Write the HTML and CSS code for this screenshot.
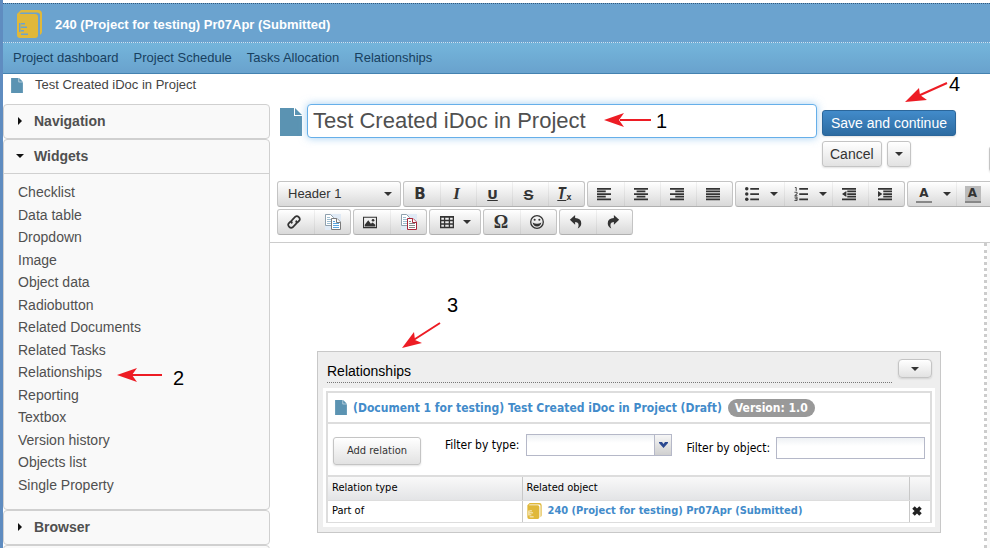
FILE: index.html
```html
<!DOCTYPE html>
<html lang="en">
<head>
<meta charset="utf-8">
<title>240 (Project for testing) Pr07Apr</title>
<link rel="stylesheet" href="styles.css">
</head>
<body>
<svg class="defs" aria-hidden="true">
  <symbol id="doc" viewBox="0 0 22 28"><path d="M0 0H14V8H22V28H0Z"/><path d="M15 0L22 7H15Z"/></symbol>
  <symbol id="caret" viewBox="0 0 8 4"><path d="M0 0H8L4 4Z"/></symbol>
  <symbol id="book" viewBox="0 0 25 28">
    <path class="gold" d="M0 4L4 0H21Q25 0 25 4V22Q25 23.500 23 25V5Q23 2.500 20 2.500H4L2.500 4H18Q21 4 21 7V25Q21 28 18 28H3Q0 28 0 25Z"/>
    <path class="pages" d="M2 13H3.500V22H2ZM4 13H8V14.500H4ZM4 16.500H10V18H4ZM4 20H7V21.500H4ZM4 23.500H11V25H4Z"/>
  </symbol>
  <symbol id="left" viewBox="0 0 16 16"><path d="M0 1H16V3H0ZM0 4H10V6H0ZM0 7H16V9H0ZM0 10H10V12H0ZM0 13H16V15H0Z"/></symbol>
  <symbol id="center" viewBox="0 0 16 16"><path d="M0 1H16V3H0ZM3 4H13V6H3ZM0 7H16V9H0ZM3 10H13V12H3ZM0 13H16V15H0Z"/></symbol>
  <symbol id="right" viewBox="0 0 16 16"><path d="M0 1H16V3H0ZM6 4H16V6H6ZM0 7H16V9H0ZM6 10H16V12H6ZM0 13H16V15H0Z"/></symbol>
  <symbol id="full" viewBox="0 0 16 16"><path d="M0 1H16V3H0ZM0 4H16V6H0ZM0 7H16V9H0ZM0 10H16V12H0ZM0 13H16V15H0Z"/></symbol>
  <symbol id="bullets" viewBox="0 0 16 16"><path d="M6 1H16V3H6ZM6 7H16V9H6ZM6 13H16V15H6Z"/><circle cx="2" cy="2" r="2"/><circle cx="2" cy="8" r="2"/><circle cx="2" cy="14" r="2"/></symbol>
  <symbol id="numbers" viewBox="0 0 16 16"><path d="M6 1H16V3H6ZM6 7H16V9H6ZM6 13H16V15H6Z"/><path class="line" d="M1 .5H2.500V4.500M.5 6H3.500V8L1 9.500V10H4M.5 11.500H3.500V15.500H.5M1 13.500H3.500"/></symbol>
  <symbol id="outdent" viewBox="0 0 16 16"><path d="M0 1H16V3H0ZM6 4H16V6H6ZM6 7H16V9H6ZM6 10H16V12H6ZM0 13H16V15H0ZM5 4.500V11.500L0 8Z"/></symbol>
  <symbol id="indent" viewBox="0 0 16 16"><path d="M0 1H16V3H0ZM6 4H16V6H6ZM6 7H16V9H6ZM6 10H16V12H6ZM0 13H16V15H0ZM0 4.500V11.500L5 8Z"/></symbol>
  <symbol id="link" viewBox="0 0 16 16"><path class="thick" d="M6 9.500Q4 7.500 6 5.500L9.500 2Q11.500 .5 13.500 2.500Q15.500 4.500 14 6.500L11.500 9M10 6.500Q12 8.500 10 10.500L6.500 14Q4.500 15.500 2.500 13.500Q.5 11.500 2 9.500L4.500 7"/></symbol>
  <symbol id="copy" viewBox="0 0 16 16">
    <path class="haze" d="M0 0H16V16H0Z"/>
    <path class="sheet far" d="M.5 .5H5.500L8.500 3.500V11.500H.5Z"/><path class="rows far-rows" d="M2 3.500H5M2 5.500H7M2 7.500H7M2 9.500H7"/>
    <path class="sheet near" d="M6.500 4.500H12L15.500 8V15.500H6.500Z"/><path class="sheet near" d="M11.500 4.500V8.500H15.500"/><path class="rows near-rows" d="M8 7.500H10M8 9.500H14M8 11.500H14M8 13.500H14"/>
  </symbol>
  <symbol id="image" viewBox="0 0 16 16"><path fill-rule="evenodd" d="M0 2H16V15H0ZM1.200 3.200V13.800H14.800V3.200Z"/><path d="M2 13V11L6 6L9 10L11 8.500L14 11V13Z"/><circle cx="11.500" cy="6" r="1.500"/></symbol>
  <symbol id="table" viewBox="0 0 16 16"><path fill-rule="evenodd" d="M0 1H16V15H0ZM1.500 3V5.500H4.500V3ZM6 3V5.500H10V3ZM11.500 3V5.500H14.500V3ZM1.500 7V9.500H4.500V7ZM6 7V9.500H10V7ZM11.500 7V9.500H14.500V7ZM1.500 11V13.500H4.500V11ZM6 11V13.500H10V11ZM11.500 11V13.500H14.500V11Z"/></symbol>
  <symbol id="smile" viewBox="0 0 16 16"><circle class="ring" cx="8" cy="8" r="7.200"/><circle cx="5.300" cy="5.500" r="1.200"/><circle cx="10.700" cy="5.500" r="1.200"/><path d="M3 8.500Q8 11.500 13 8.500Q12 13 8 13Q4 13 3 8.500Z"/></symbol>
  <symbol id="undo" viewBox="0 0 16 16"><path d="M1 5.500L7 0V3.500Q14 4 14 9.500Q14 13.500 10 15.500Q13 8 7 8V11Z"/></symbol>
  <symbol id="redo" viewBox="0 0 16 16"><path d="M15 5.500L9 0V3.500Q2 4 2 9.500Q2 13.500 6 15.500Q3 8 9 8V11Z"/></symbol>
</svg>

<div class="page">
  <header class="project">
    <svg class="project-icon" aria-hidden="true"><use href="#book"/></svg>
    <h1>240 (Project for testing) Pr07Apr (Submitted)</h1>
  </header>
  <nav class="tabs">
    <a href="#dashboard">Project dashboard</a>
    <a href="#schedule">Project Schedule</a>
    <a href="#tasks">Tasks Allocation</a>
    <a href="#relationships">Relationships</a>
  </nav>
  <div class="crumb">
    <svg class="crumb-icon" aria-hidden="true"><use href="#doc"/></svg>
    <a href="#doc-page">Test Created iDoc in Project</a>
  </div>

  <div class="columns">
    <aside class="sidebar">
      <section class="fold">
        <button class="fold-head"><svg class="tri" viewBox="0 0 8 8"><path d="M2 0L6 4L2 8Z"/></svg>Navigation</button>
      </section>
      <section class="fold">
        <button class="fold-head open"><svg class="tri" viewBox="0 0 8 8"><path d="M0 2H8L4 6Z"/></svg>Widgets</button>
        <ul class="widgets">
          <li>Checklist</li><li>Data table</li><li>Dropdown</li><li>Image</li><li>Object data</li><li>Radiobutton</li><li>Related Documents</li><li>Related Tasks</li><li>Relationships</li><li>Reporting</li><li>Textbox</li><li>Version history</li><li>Objects list</li><li>Single Property</li>
        </ul>
      </section>
      <section class="fold">
        <button class="fold-head"><svg class="tri" viewBox="0 0 8 8"><path d="M2 0L6 4L2 8Z"/></svg>Browser</button>
      </section>
      <section class="fold rest"></section>
    </aside>

    <main class="main">
      <div class="title-row">
        <svg class="title-icon" aria-hidden="true"><use href="#doc"/></svg>
        <input class="title" type="text" aria-label="Title" value="Test Created iDoc in Project">
        <div class="actions">
          <button class="btn primary">Save and continue</button>
          <button class="btn">Cancel</button>
          <button class="btn more" aria-label="More actions"><svg class="caret"><use href="#caret"/></svg></button>
        </div>
        <button class="btn overflow" aria-label="Options"></button>
      </div>

      <div class="toolbar">
        <div class="bar">
          <div class="group format">
            <select aria-label="Format"><option>Header 1</option></select>
            <svg class="caret"><use href="#caret"/></svg>
          </div>
          <div class="group">
            <button class="tool g-b">B</button><button class="tool g-i">I</button><button class="tool g-u">U</button><button class="tool g-s">S</button><button class="tool g-t" aria-label="Clear formatting"><i>T</i><sub>x</sub></button>
          </div>
          <div class="group">
            <button class="tool" aria-label="Align left"><svg><use href="#left"/></svg></button><button class="tool" aria-label="Align center"><svg><use href="#center"/></svg></button><button class="tool" aria-label="Align right"><svg><use href="#right"/></svg></button><button class="tool" aria-label="Justify"><svg><use href="#full"/></svg></button>
          </div>
          <div class="group">
            <button class="tool split" aria-label="Bullet list"><svg><use href="#bullets"/></svg><svg class="caret"><use href="#caret"/></svg></button><button class="tool split" aria-label="Numbered list"><svg><use href="#numbers"/></svg><svg class="caret"><use href="#caret"/></svg></button><button class="tool" aria-label="Outdent"><svg><use href="#outdent"/></svg></button><button class="tool" aria-label="Indent"><svg><use href="#indent"/></svg></button>
          </div>
          <div class="group">
            <button class="tool split" aria-label="Text color"><span class="ink">A</span><svg class="caret"><use href="#caret"/></svg></button><button class="tool split" aria-label="Background color"><span class="ink fill">A</span><svg class="caret"><use href="#caret"/></svg></button>
          </div>
        </div>
        <div class="bar">
          <div class="group">
            <button class="tool" aria-label="Link"><svg><use href="#link"/></svg></button><button class="tool wide-icon" aria-label="Copy"><svg><use href="#copy"/></svg></button>
          </div>
          <div class="group">
            <button class="tool" aria-label="Image"><svg><use href="#image"/></svg></button><button class="tool wide-icon red" aria-label="Copy special"><svg><use href="#copy"/></svg></button>
          </div>
          <div class="group">
            <button class="tool split table-tool" aria-label="Table"><svg><use href="#table"/></svg><svg class="caret"><use href="#caret"/></svg></button>
          </div>
          <div class="group">
            <button class="tool g-o">Ω</button><button class="tool" aria-label="Emoticons"><svg><use href="#smile"/></svg></button>
          </div>
          <div class="group">
            <button class="tool" aria-label="Undo"><svg><use href="#undo"/></svg></button><button class="tool" aria-label="Redo"><svg><use href="#redo"/></svg></button>
          </div>
        </div>
      </div>

      <div class="editor">
        <div class="sheet-area">
          <section class="panel">
            <div class="panel-head">
              <h2>Relationships</h2>
              <button class="btn panel-menu" aria-label="Widget menu"><svg class="caret"><use href="#caret"/></svg></button>
            </div>
            <div class="panel-body">
              <div class="grid-box">
                <div class="object">
                  <svg class="crumb-icon" aria-hidden="true"><use href="#doc"/></svg>
                  <a href="#doc-1">(Document 1 for testing) Test Created iDoc in Project (Draft)</a>
                  <span class="badge">Version: 1.0</span>
                </div>
                <div class="filters">
                  <button class="btn add">Add relation</button>
                  <label for="ftype">Filter by type:</label>
                  <div class="combo">
                    <select id="ftype"><option></option></select>
                    <span class="trigger"><svg viewBox="0 0 9 6"><path d="M0 0H3L4.500 2L6 0H9V1L4.500 6L0 1Z"/></svg></span>
                  </div>
                  <label class="second" for="fobj">Filter by object:</label>
                  <input class="second" id="fobj" type="text">
                </div>
                <table class="relations">
                  <thead><tr><th class="kind">Relation type</th><th>Related object</th><th class="act"></th></tr></thead>
                  <tbody><tr><td>Part of</td><td><div class="related"><svg class="small-book" aria-hidden="true"><use href="#book"/></svg><a href="#p240">240 (Project for testing) Pr07Apr (Submitted)</a></div></td>
                  <td class="act"><button class="remove" aria-label="Remove"><svg viewBox="0 0 10 10"><path d="M1.500 1.500L8.500 8.500M8.500 1.500L1.500 8.500"/></svg></button></td></tr></tbody>
                </table>
              </div>
            </div>
          </section>
        </div>
      </div>
    </main>
  </div>

  <svg class="arrows" aria-hidden="true">
    <path class="shaft" d="M651 120H620M162 375H130M440 323L412 341M947 83L918 96"/>
    <path d="M604 120L624 113L619 120L624 127ZM117 375L137 368L132 375L137 382ZM402 348L414 332L415 340L422 343ZM905 102L919 88L920 95L927 100Z"/>
  </svg>
  <span class="note n1">1</span><span class="note n2">2</span><span class="note n3">3</span><span class="note n4">4</span>
</div>
</body>
</html>
```
FILE: styles.css
```css
* { box-sizing: border-box; }
body {
  margin: 0;
  background: #fff;
  color: #333;
  font: 14px/20px "Liberation Sans", Arial, sans-serif;
}
button, input, select { font: inherit; color: inherit; margin: 0; padding: 0; }
a { color: inherit; text-decoration: none; }
.defs { position: absolute; width: 0; height: 0; }
.page {
  position: relative;
  display: flex;
  flex-direction: column;
  height: 100vh;
  overflow: hidden;
  padding-top: 3px;
  border-left: 3px solid #5f8cc0;
}
.gold { fill: #e0b83a; }
.pages { fill: var(--pages, #6ba3cf); }

/* Header */
.project {
  flex: none;
  display: flex;
  align-items: center;
  gap: 13px;
  height: 40px;
  padding-left: 14px;
  padding-top: 2px;
  background: #6ba3cf;
  border-top: 1px dotted #33597c;
  border-bottom: 1px dotted #cfe2f0;
}
.project-icon { width: 25px; height: 28px; }
h1 { margin: 0; padding-top: 2px; font-size: 13px; color: #fff; }
.tabs {
  flex: none;
  display: flex;
  gap: 15px;
  height: 31px;
  padding-left: 10px;
  font-size: 13px;
  line-height: 29px;
  color: #17405f;
  background: linear-gradient(#74b5db, #69a2cd);
  border-bottom: 1px solid #4482b0;
}
.crumb {
  flex: none;
  display: flex;
  align-items: center;
  gap: 12px;
  height: 22px;
  padding-left: 8px;
  font-size: 13px;
  color: #444;
}
.crumb-icon { width: 12px; height: 15px; fill: #5b93b2; }

/* Sidebar */
.columns { flex: 1; display: flex; min-height: 0; padding-top: 8px; }
.sidebar { flex: none; width: 267px; overflow: hidden; }
.fold { background: #f9f9f9; border: 1px solid #d0d0d0; border-radius: 4px; }
.rest { height: 40px; }
.fold-head {
  display: flex;
  align-items: center;
  gap: 10px;
  width: 100%;
  height: 33px;
  padding: 0 0 2px 12px;
  border: 0;
  background: none;
  font-size: 14px;
  font-weight: bold;
  color: #505050;
}
.open { height: 34px; border-bottom: 1px solid #d0d0d0; }
.tri { width: 8px; height: 8px; fill: #111; }
.widgets {
  margin: 0;
  padding: 7px 14px 13px;
  list-style: none;
  line-height: 1.61;
  color: #505050;
}

/* Title row */
.main { flex: 1; min-width: 0; display: flex; flex-direction: column; }
.title-row { flex: none; display: flex; align-items: flex-start; height: 77px; padding-left: 10px; }
.title-icon { flex: none; width: 22px; height: 28px; margin: 4px 5px 0 0; fill: #5b93b2; }
.title {
  flex: 1;
  min-width: 0;
  height: 34px;
  padding-left: 5px;
  border: 1px solid #66afe9;
  border-radius: 4px;
  outline: 0;
  box-shadow: 0 0 8px rgba(102, 175, 233, .6);
  font-size: 22px;
  color: #505050;
}
.actions { flex: none; display: flex; flex-wrap: wrap; gap: 5px; width: 172px; padding: 6px 0 0 5px; }
.btn {
  height: 26px;
  padding: 0 7px;
  border: 1px solid #c4c4c4;
  border-radius: 3px;
  background: linear-gradient(#fff, #e2e2e2);
  box-shadow: 0 1px 2px rgba(0, 0, 0, .12);
  line-height: 22px;
  color: #333;
}
.primary {
  margin-right: 20px;
  padding: 0 8px;
  border-color: #2b669a;
  background: linear-gradient(#428bca, #2d6ca2);
  color: #fff;
}
.overflow { flex: none; width: 24px; margin: 42px -23px 0 0; }
.caret { display: block; width: 8px; height: 4px; fill: #333; }

/* Toolbar */
.toolbar { flex: none; padding-left: 7px; overflow: hidden; }
.bar { display: flex; gap: 2px; height: 28px; }
.group {
  flex: none;
  display: flex;
  height: 26px;
  border: 1px solid #c4c4c4;
  border-bottom-color: #b0b0b0;
  border-radius: 3px;
  background: linear-gradient(#fff, #d9d9d9);
}
.format { display: grid; align-items: center; width: 124px; font-size: 13px; }
.format select, .format .caret { grid-area: 1 / 1; }
.format select { width: 100%; height: 24px; padding-left: 10px; border: 0; background: none; appearance: none; }
.format .caret { justify-self: end; margin-right: 8px; pointer-events: none; }
.tool {
  display: flex;
  align-items: center;
  justify-content: center;
  width: 36px;
  height: 24px;
  padding-right: 4px;
  border: 0;
  background: none;
  fill: #333;
}
.tool + .tool { border-left: 1px solid rgba(0, 0, 0, .05); }
.tool svg { width: 14px; height: 14px; }
.tool .caret { width: 8px; height: 4px; }
.split { width: 48px; gap: 11px; padding: 0 0 0 3px; }
.table-tool { width: 50px; gap: 9px; padding: 0; }
.wide-icon { padding-right: 0; }
.wide-icon svg { width: 16px; height: 16px; }
.line { fill: none; stroke: #333; stroke-width: 1; }
.thick { fill: none; stroke: #333; stroke-width: 2; }
.ring { fill: none; stroke: #333; stroke-width: 1.5; }
.haze { fill: #e0eaf5; }
.sheet { fill: #fff; stroke: #8fa0ad; }
.near { stroke: var(--near, #7a7a7a); }
.rows { fill: none; stroke: #9dbdd0; }
.near-rows { stroke: var(--near-rows, #5aa5dd); }
.red { --near: #a8283a; --near-rows: #888; }
.g-b { font: bold 15px "DejaVu Sans", sans-serif; }
.g-i { font: italic bold 17px "Liberation Serif", serif; }
.g-u { font: bold 13px "DejaVu Sans", sans-serif; text-decoration: underline; }
.g-s { font: bold 15px "Liberation Sans", sans-serif; text-decoration: line-through; }
.g-t { font: bold 15px "DejaVu Sans Mono", monospace; }
.g-t i { text-decoration: underline; }
.g-t sub { font-size: 9px; line-height: 9px; align-self: flex-end; margin-bottom: 4px; }
.g-o { padding-right: 2px; font: bold 18px "Liberation Serif", serif; }
.ink {
  width: 16px;
  height: 17px;
  border-bottom: 2px solid #888;
  font: bold 12px/15px "DejaVu Sans", sans-serif;
  text-align: center;
}
.fill { background: #bbb; }

/* Editor */
.editor { flex: 1; margin-top: 5px; padding-right: 3px; border-top: 1px solid #ccc; background: #fafafa; }
.sheet-area {
  height: 100%;
  padding: 108px 43px 0 47px;
  border-right: 3px dotted #ccc;
  background: #fff;
}
.panel {
  padding: 5px;
  border: 1px solid #c8c8c8;
  background: #eee;
  color: #000;
}
.panel-head { display: flex; justify-content: space-between; gap: 6px; height: 31px; padding: 0 3px 0 4px; }
h2 {
  flex: 1;
  height: 26px;
  margin: 0;
  border-bottom: 1px dotted #777;
  font-size: 14px;
  font-weight: normal;
  line-height: 28px;
}
.panel-menu { display: flex; align-items: center; justify-content: center; width: 34px; height: 19px; margin-top: 2px; border-radius: 4px; }
.panel-body { padding: 3px 3px 4px; background: #fff; font: 12px/16px "DejaVu Sans Condensed", Tahoma, sans-serif; }
.grid-box { border: 2px solid #ddd; border-bottom-width: 1px; }
.panel a { font-weight: bold; color: #428bca; }
.object {
  display: flex;
  align-items: center;
  gap: 6px;
  height: 31px;
  padding-left: 7px;
  border-bottom: 2px solid #ddd;
  font-size: 12px;
  white-space: nowrap;
}
.badge {
  height: 18px;
  padding: 0 7px;
  border-radius: 9px;
  background: #999;
  color: #fff;
  font-weight: bold;
  line-height: 18px;
}
.filters {
  display: flex;
  align-items: flex-start;
  height: 53px;
  padding: 10px 5px 0;
  border-bottom: 2px solid #ddd;
  line-height: 22px;
}
.add { width: 88px; height: 28px; margin: 3px 24px 0 0; font-size: 11px; }
.filters label { margin-right: 6px; white-space: nowrap; }
.combo { position: relative; flex: 1; display: flex; height: 22px; margin-right: 14px; }
.combo select, .filters input {
  width: 100%;
  min-width: 0;
  height: 22px;
  border: 1px solid #b5b8c8;
  border-radius: 0;
  background: linear-gradient(#eef1f4, #fff 8px);
  appearance: none;
}
.filters input { flex: 1; }
.filters .second { margin-top: 3px; }
.trigger {
  position: absolute;
  top: 1px;
  right: 1px;
  display: grid;
  place-items: center;
  width: 17px;
  height: 20px;
  border-left: 1px solid #b5b8c8;
  background: linear-gradient(#f6f6f6, #cfcfcf);
  pointer-events: none;
}
.trigger svg { width: 9px; height: 6px; fill: #2a4890; }
.relations { width: 100%; border-collapse: collapse; table-layout: fixed; font-size: 11px; }
th, td { height: 23px; padding: 0 4px; text-align: left; font-weight: normal; }
td { height: 22px; }
th + th, td + td { border-left: 1px solid #c8c8c8; }
thead { background: linear-gradient(#f9f9f9, #e3e4e6); }
thead th { border-bottom: 1px solid #ddd; }
.kind { width: 194px; }
.act { width: 21px; padding: 0 2px; }
.related { display: flex; align-items: center; gap: 6px; }
.small-book { --pages: #fff; width: 15px; height: 16px; }
.remove { display: block; width: 10px; height: 10px; border: 0; background: none; }
.remove svg { display: block; width: 10px; height: 10px; fill: none; stroke: #222; stroke-width: 3.5; }

/* Step callouts */
.arrows { position: absolute; top: 0; left: -3px; width: 990px; height: 548px; fill: #ed1c24; pointer-events: none; }
.shaft { stroke: #ed1c24; stroke-width: 2; }
.note { position: absolute; font-size: 20px; line-height: 20px; color: #000; }
.n1 { left: 653px; top: 111px; }
.n2 { left: 170px; top: 368px; }
.n3 { left: 444px; top: 295px; }
.n4 { left: 946px; top: 74px; }
```
